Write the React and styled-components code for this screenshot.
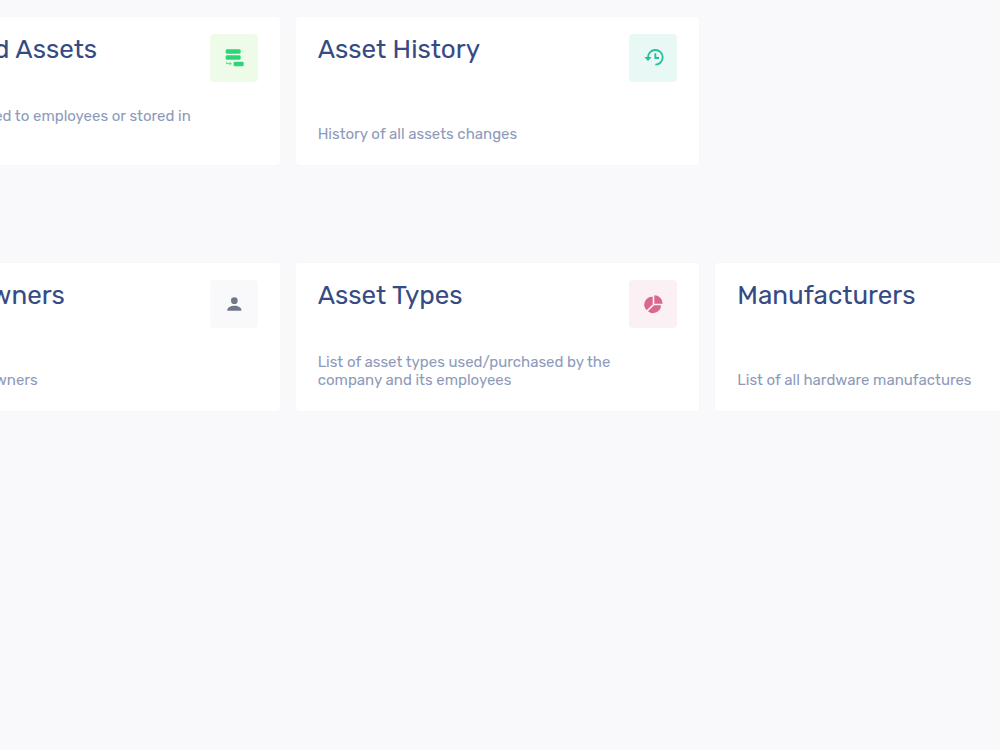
import React from 'react';
import styled, { createGlobalStyle } from 'styled-components';

const GlobalStyle = createGlobalStyle`
  * {
    box-sizing: border-box;
  }
  body {
    margin: 0;
    background-color: #f9f9fb;
    font-family: Rubik, Inter, sans-serif;
  }
`;

const Page = styled.main`
  min-height: 100vh;
  padding-top: 17px;
  overflow: hidden;
`;

// the board is wider than the window and runs off both sides
const Board = styled.div`
  display: flex;
  flex-direction: column;
  gap: 98px;
  margin: 0 -119px 0 -124px;
`;

const CardGrid = styled.section`
  display: grid;
  grid-template-columns: repeat(3, 1fr);
  gap: 16px;
`;

const Card = styled.article`
  display: flex;
  justify-content: space-between;
  min-height: 148px;
  padding: 17px 22px 22px;
  border-radius: 3px;
  background-color: #ffffff;
  box-shadow: 0 0 1px rgba(40, 50, 90, 0.06);
`;

const CardText = styled.div`
  display: flex;
  flex: 1;
  flex-direction: column;
  justify-content: space-between;
`;

const Title = styled.h2`
  margin: 0;
  font-size: 26px;
  font-weight: 400;
  line-height: 32px;
  color: #364a84;
`;

const Desc = styled.p`
  margin: 0;
  font-size: 15px;
  line-height: 18px;
  color: #8e9abb;
`;

const IconTile = styled.div`
  display: flex;
  flex-shrink: 0;
  align-items: center;
  justify-content: center;
  width: 48px;
  height: 48px;
  border-radius: 4px;
  color: ${({ $color }) => $color};
  background-color: ${({ $bg }) => $bg};
`;

const Icon = ({ children }) => (
  <svg width="24" height="24" viewBox="0 0 72 72" fill="currentColor" aria-hidden="true">
    {children}
  </svg>
);

const AssignedIcon = () => (
  <Icon>
    <rect x="11" y="10" width="45" height="13" rx="4" />
    <rect x="11" y="28" width="45" height="13" rx="4" />
    <rect x="35" y="47" width="30" height="14" rx="4" />
    <path d="M14 48v5h12M23 49l5 4-5 4" fill="none" stroke="currentColor" strokeWidth="2.5" />
  </Icon>
);

const HistoryIcon = () => (
  <Icon>
    <path d="M21 34a22 22 0 1 1 22 22" fill="none" stroke="currentColor" strokeWidth="5.5" />
    <path d="M10 33h22L21 45z" />
    <path d="M43 22v14h11" fill="none" stroke="currentColor" strokeWidth="5.5" />
  </Icon>
);

const OwnerIcon = () => (
  <Icon>
    <circle cx="37" cy="26" r="10" />
    <path d="M16 56v-3c0-7 10-12 21-12s21 5 21 12v3z" />
  </Icon>
);

const TypesIcon = () => (
  <Icon>
    <path d="M40 10a25 25 0 0 1 25 25H40z" />
    <path d="M35 14v23L17 55A24 24 0 0 1 35 14z" />
    <path d="M39 40h21a24 24 0 0 1-39 18z" />
  </Icon>
);

const MakerIcon = () => (
  <Icon>
    <path d="M10 60V30l17 10V30l17 10V12h16v48z" />
  </Icon>
);

const groups = [
  {
    name: 'Assets',
    cards: [
      {
        title: 'Assigned Assets',
        desc: 'Assets assigned to employees or stored in inventory',
        icon: AssignedIcon,
        color: '#2ed47a',
        bg: '#effbe9',
      },
      {
        title: 'Asset History',
        desc: 'History of all assets changes',
        icon: HistoryIcon,
        color: '#24bf9f',
        bg: '#e8f8f5',
      },
    ],
  },
  {
    name: 'Settings',
    cards: [
      {
        title: 'Asset Owners',
        desc: 'List of asset owners',
        icon: OwnerIcon,
        color: '#6f7788',
        bg: '#f9f9fb',
      },
      {
        title: 'Asset Types',
        desc: 'List of asset types used/purchased by the company and its employees',
        icon: TypesIcon,
        color: '#d9688f',
        bg: '#fbf0f4',
      },
      {
        title: 'Manufacturers',
        desc: 'List of all hardware manufactures',
        icon: MakerIcon,
        color: '#4c84ff',
        bg: '#edf3ff',
      },
    ],
  },
];

const AssetCard = ({ card }) => {
  const CardIcon = card.icon;
  return (
    <Card>
      <CardText>
        <Title>{card.title}</Title>
        <Desc>{card.desc}</Desc>
      </CardText>
      <IconTile $color={card.color} $bg={card.bg}>
        <CardIcon />
      </IconTile>
    </Card>
  );
};

const App = () => {
  return (
    <>
      <GlobalStyle />
      <Page>
        <Board>
          {groups.map((group) => (
            <CardGrid key={group.name} aria-label={group.name}>
              {group.cards.map((card) => (
                <AssetCard key={card.title} card={card} />
              ))}
            </CardGrid>
          ))}
        </Board>
      </Page>
    </>
  );
};

export default App;
